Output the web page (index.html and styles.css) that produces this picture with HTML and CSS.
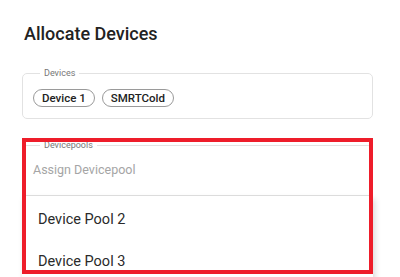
FILE: index.html
```html
<!DOCTYPE html>
<html lang="en">
<head>
    <meta charset="UTF-8">
    <meta name="viewport" content="width=device-width, initial-scale=1.0">
    <title>Allocate Devices</title>
    <link rel="stylesheet" href="styles.css">
</head>
<body>
    <div class="dialog">
        <h2 class="dialog-title">Allocate Devices</h2>

        <fieldset class="field devices-field">
            <legend>Devices</legend>
            <div class="chips">
                <span class="chip">Device 1</span>
                <span class="chip">SMRTCold</span>
            </div>
        </fieldset>

        <div class="pool-wrap">
            <fieldset class="field pool-field">
                <legend>Devicepools</legend>
                <div class="placeholder">Assign Devicepool</div>
            </fieldset>

            <ul class="menu">
                <li class="menu-item">Device Pool 2</li>
                <li class="menu-item">Device Pool 3</li>
            </ul>

            <div class="highlight"></div>
        </div>
    </div>
</body>
</html>
```

FILE: styles.css
```css
* {
    margin: 0;
    padding: 0;
    box-sizing: border-box;
}

body {
    font-family: Roboto, "Noto Sans", sans-serif;
    background: #fff;
    color: #222;
    width: 400px;
    height: 277px;
    overflow: hidden;
}

.dialog {
    padding: 22px 27px 0 22px;
}

.dialog-title {
    font-size: 18px;
    font-weight: 500;
    line-height: 24px;
    color: #222;
    padding-left: 2px;
    margin-bottom: 22px;
}

.field {
    border: 1px solid #e2e2e2;
    border-radius: 5px;
    min-width: 0;
}

.field legend {
    font-size: 9px;
    line-height: 10px;
    color: #777;
    margin-left: 7px;
    padding: 0 4px;
}

.devices-field {
    padding: 11px 10px 11px 10px;
}

.chips {
    display: flex;
    gap: 7px;
}

.chip {
    display: inline-block;
    height: 18px;
    line-height: 16px;
    padding: 0 8px;
    border: 1px solid #9a9a9a;
    border-radius: 9px;
    font-size: 11.5px;
    font-weight: 500;
    color: #222;
}

.pool-wrap {
    position: relative;
    margin-top: 21px;
}

.pool-field {
    padding: 12px 10px 24px 10px;
}

.placeholder {
    font-size: 12.5px;
    line-height: 16px;
    color: #a5a5a5;
}

.menu {
    position: absolute;
    top: 56px;
    left: 0;
    right: 0;
    list-style: none;
    background: #fff;
    padding: 3px 0 0;
    box-shadow: 0 -1px 0 #dcdcdc, 2px 3px 6px rgba(0, 0, 0, 0.15);
}

.menu-item {
    height: 42px;
    line-height: 42px;
    padding-left: 16px;
    font-size: 14.5px;
    color: #2a2a2a;
}

.highlight {
    position: absolute;
    top: -2px;
    left: 0;
    width: 351px;
    height: 136px;
    border: 4px solid #ee1d2a;
}
```
